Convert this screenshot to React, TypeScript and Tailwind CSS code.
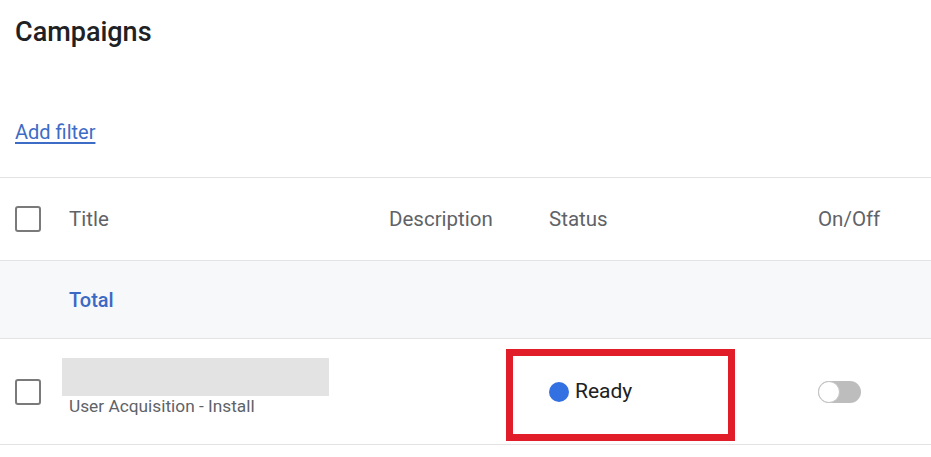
function Checkbox () {
  return <div className="h-[26px] w-[26px] rounded-[3px] border-2 border-[#7a7a7a] bg-white" />
}

function Toggle () {
  return (
    <div className="flex h-[22px] w-[43px] items-center rounded-full bg-[#bdbdbd]">
      <div className="h-[22px] w-[22px] rounded-full border border-[#c4c4c4] bg-white" />
    </div>
  )
}

export default function App () {
  return (
    <div className="min-h-[457px] w-[931px] bg-white font-['Roboto',sans-serif]">
      <h1 className="pl-[15px] pt-[16px] text-[27px] font-medium leading-[32px] text-[#202124]">
        Campaigns
      </h1>

      <div className="mt-[70px] pl-[15px]">
        <a href="#" className="text-[20px] leading-[28px] text-[#3d6cc6] underline underline-offset-[3px]">
          Add filter
        </a>
      </div>

      <div className="mt-[31px] border-t border-[#e3e3e3]">
        <div className="grid h-[83px] grid-cols-[54px_320px_160px_269px_1fr] items-center border-b border-[#e3e3e3] pl-[15px] text-[20.5px] text-[#5f6368]">
          <Checkbox />
          <div>Title</div>
          <div>Description</div>
          <div>Status</div>
          <div>On/Off</div>
        </div>

        <div className="grid h-[78px] grid-cols-[54px_320px_160px_269px_1fr] items-center border-b border-[#e3e3e3] bg-[#f7f8fa] pl-[15px]">
          <div />
          <div className="text-[20px] font-medium text-[#3b69c4]">Total</div>
        </div>

        <div className="relative grid h-[106px] grid-cols-[54px_320px_160px_269px_1fr] items-center border-b border-[#e3e3e3] pl-[15px]">
          <Checkbox />
          <div className="flex flex-col self-start pt-[19px]">
            <div className="ml-[-7px] h-[38px] w-[267px] bg-[#e3e3e3]" />
            <div className="text-[17.3px] leading-[20px] text-[#5f6368]">User Acquisition - Install</div>
          </div>
          <div />
          <div className="flex items-center gap-[6px]">
            <span className="h-[20px] w-[20px] rounded-full bg-[#3371e3]" />
            <span className="text-[21px] text-[#202124]">Ready</span>
          </div>
          <Toggle />
          <div className="pointer-events-none absolute left-[506px] top-[10px] h-[92px] w-[229px] border-[7px] border-[#e11d2a]" />
        </div>
      </div>
    </div>
  )
}
